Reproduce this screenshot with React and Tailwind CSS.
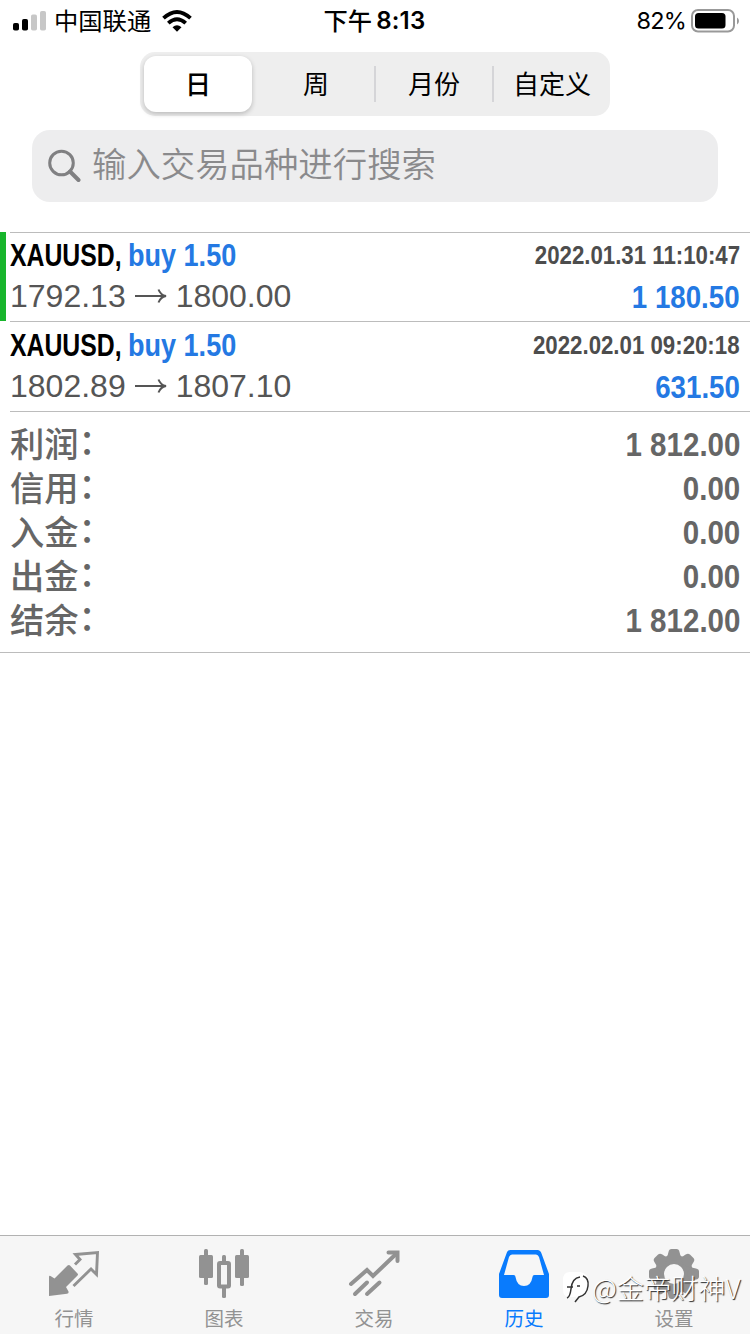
import { useState } from "react";

const periods = ["日", "周", "月份", "自定义"];

const deals = [
  { symbol: "XAUUSD,", side: "buy 1.50", time: "2022.01.31 11:10:47", open: "1792.13", close: "1800.00", profit: "1 180.50", active: true },
  { symbol: "XAUUSD,", side: "buy 1.50", time: "2022.02.01 09:20:18", open: "1802.89", close: "1807.10", profit: "631.50", active: false },
];

const totals = [
  { label: "利润", value: "1 812.00" },
  { label: "信用", value: "0.00" },
  { label: "入金", value: "0.00" },
  { label: "出金", value: "0.00" },
  { label: "结余", value: "1 812.00" },
];

const tabs = [
  { label: "行情", icon: QuotesIcon },
  { label: "图表", icon: ChartIcon },
  { label: "交易", icon: TradeIcon },
  { label: "历史", icon: HistoryIcon },
  { label: "设置", icon: GearIcon },
];

function QuotesIcon() {
  return (
    <svg width="52" height="50" viewBox="0 0 52 50" fill="currentColor">
      <path d="M22 16.500 29.500 24.500Q30.500 25.500 29.500 26.500L18 38 20.500 42.500Q21 44.500 19 44.800L1 47V28Q1 26 2.500 27L6.500 29.500 19.500 16.500Q21 15.300 22 16.500Z" />
      <path d="M25.500 37 43 20 48.500 25.500 49.500 3.500 27.500 5.500 32 10.500 27 15.500" fill="none" stroke="currentColor" strokeWidth="2.900" />
    </svg>
  );
}

function ChartIcon() {
  return (
    <svg width="52" height="50" viewBox="0 0 52 50" fill="currentColor">
      <rect x="6" y="0" width="4" height="36" rx="1.500" />
      <rect x="1" y="6" width="14" height="23" rx="1.500" />
      <rect x="42" y="0" width="4" height="37" rx="1.500" />
      <rect x="37" y="6" width="14" height="23" rx="1.500" />
      <rect x="24" y="6" width="4" height="8" rx="1.500" />
      <rect x="24" y="37" width="4" height="12" rx="1.500" />
      <rect x="21" y="14" width="10" height="23.500" rx="1" fill="none" stroke="currentColor" strokeWidth="4" />
    </svg>
  );
}

function TradeIcon() {
  return (
    <svg width="52" height="50" viewBox="0 0 52 50" fill="none" stroke="currentColor" strokeWidth="4" strokeLinecap="round">
      <path d="M3 35 19 21 25 27 48 5" />
      <path d="M40.500 3.500H49.500V12" />
      <path d="M7 45 19 33.500M19 45 31.500 33.500" />
    </svg>
  );
}

function HistoryIcon() {
  return (
    <svg width="52" height="50" viewBox="0 0 52 50" fill="currentColor">
      <path
        fillRule="evenodd"
        d="M12.500 1H39.500Q42.500 1 43.500 4.500L51 25V46Q51 49 48 49H4Q1 49 1 46V25L8.500 4.500Q9.500 1 12.500 1ZM14 5.500Q12 5.500 11 8L6 26H15.500Q17.500 26 17.500 28 19 37 26 37 33 37 34.500 28 34.500 26 36.500 26H46L41 8Q40 5.500 38 5.500Z"
      />
    </svg>
  );
}

function GearIcon() {
  return (
    <svg width="52" height="50" viewBox="0 0 52 50" fill="currentColor">
      <g transform="translate(26 25)">
        <path
          fillRule="evenodd"
          d="M-19 0A19 19 0 1 0 19 0A19 19 0 1 0 -19 0ZM-10 0A10 10 0 1 0 10 0A10 10 0 1 0 -10 0Z"
        />
        {[0, 45, 90, 135, 180, 225, 270, 315].map((a) => (
          <path key={a} transform={`rotate(${a})`} d="M-8 -16.500Q-6 -18 -5.500 -22 -5 -25 -2.500 -25H2.500Q5 -25 5.500 -22 6 -18 8 -16.500L0 -13Z" />
        ))}
      </g>
    </svg>
  );
}

function StatusBar() {
  return (
    <div className="grid h-[41px] grid-cols-3 pl-[13px] pr-[11px] leading-[39px]">
      <div className="flex items-center">
        <svg width="33" height="20" viewBox="0 0 33 20">
          <rect x="0" y="12" width="6" height="7.500" rx="1.800" />
          <rect x="9" y="8" width="6" height="11.500" rx="1.800" />
          <rect x="18" y="3.500" width="6" height="16" rx="1.800" fill="#c7c7c7" />
          <rect x="27" y="0" width="6" height="19.500" rx="1.800" fill="#c7c7c7" />
        </svg>
        <span className="-mt-[2px] ml-[8px] whitespace-nowrap text-[24.300px]">中国联通</span>
        <svg className="ml-[11px]" width="30" height="22" viewBox="0 0 30 22" fill="none" stroke="#000" strokeWidth="3.800">
          <path d="M1.500 8.200Q15 -4.200 28.500 8.200" />
          <path d="M6.300 13.200Q15 5.200 23.700 13.200" />
          <path d="M10.500 17.300Q15 13.200 19.500 17.300L15 21.800Z" fill="#000" stroke="none" />
        </svg>
      </div>
      <div className="flex items-center justify-center">
        <span className="-ml-[3px] -mt-[2px] text-[24.300px] font-medium">下午</span>
        <span className="ml-1 font-['Inter',sans-serif] text-2xl font-semibold leading-[41px] tracking-[0.2px]">8:13</span>
      </div>
      <div className="flex items-center justify-end">
        <span className="font-['Inter',sans-serif] text-[23.500px] leading-[41px] tracking-[-0.8px]">82%</span>
        <svg className="ml-[5px] -mr-px" width="49" height="24" viewBox="0 0 49 24">
          <rect x="1" y="1" width="42" height="21.500" rx="6" fill="none" stroke="#999" strokeWidth="2" />
          <rect x="4" y="4" width="30.500" height="15.500" rx="3.500" />
          <path d="M46 8.500Q48 9.500 48 12T46 15.500Z" fill="#999" />
        </svg>
      </div>
    </div>
  );
}

function PeriodPicker({ value, onChange }) {
  return (
    <div className="mx-auto mt-[11px] flex h-16 w-[470px] items-center rounded-[15px] bg-[#eeeeee] pl-1 text-[26px]">
      {periods.map((p, i) => (
        <button
          key={p}
          onClick={() => onChange(i)}
          className={
            i === value
              ? "mr-[4px] h-14 w-[108px] rounded-[12px] bg-white pb-[2px] font-medium leading-[54px] shadow-[0_2px_5px_rgba(0,0,0,0.22)]"
              : "h-9 w-[118px] border-l-2 border-[#d5d5d8] pb-[2px] leading-[34px] nth-2:border-transparent"
          }
        >
          {p}
        </button>
      ))}
    </div>
  );
}

function Deal({ deal }) {
  return (
    <div className={deal.active ? "flex h-[89px]" : "flex h-[90px]"}>
      <div className={deal.active ? "w-[6px] bg-[#18b52c]" : "w-[6px]"} />
      <div
        className={
          deal.active
            ? "ml-1 flex-1 border-t border-[#bcbcbc] pr-[10px] font-['Liberation_Sans',sans-serif]"
            : "ml-1 flex-1 border-t border-[#bcbcbc] pr-[10px] pt-px font-['Liberation_Sans',sans-serif]"
        }
      >
        <div className="flex h-[43px] justify-between font-bold leading-[45px]">
          <div className="flex text-[32px]">
            <span className="w-[118px] whitespace-nowrap">
              <span className="inline-block origin-left scale-x-[0.775]">{deal.symbol}</span>
            </span>
            <span className="inline-block origin-left scale-x-[0.845] text-[#2479e3]">{deal.side}</span>
          </div>
          <span className="origin-right scale-x-[0.866] text-[25.700px] text-[#4d4d4d]">{deal.time}</span>
        </div>
        <div className="flex h-[40px] items-center justify-between text-[32px] leading-[38px]">
          <div className="flex items-center text-[#555555]">
            <span>{deal.open}</span>
            <svg className="mx-[9px]" width="32" height="18" viewBox="0 0 32 18" fill="none" stroke="currentColor" strokeWidth="2">
              <path d="M0 9H30M23.500 2.500Q25.500 8 31 9 25.500 10 23.500 15.500" />
            </svg>
            <span>{deal.close}</span>
          </div>
          <span className="mt-px origin-right scale-x-[0.865] font-bold text-[#2479e3]">{deal.profit}</span>
        </div>
      </div>
    </div>
  );
}

function Watermark() {
  return (
    <div className="absolute bottom-[20px] left-[562px] flex h-[54px] items-center whitespace-nowrap text-[27.200px] font-light text-white [text-shadow:1px_1px_1px_#222]">
      <svg width="30" height="36" viewBox="0 0 30 36">
        <path d="M8 3H18Q27 4 27 15 27 24 20 27L14 32V28H7Q1 28 1 20V11Q1 3 8 3Z" fill="#fff" />
        <path d="M5 29Q8 28 9 20 10 9 18 8M5 18H11M15 17H18M21 7Q27 9 26 17 25 26 17 28L13 33" fill="none" stroke="#333" strokeWidth="1.500" />
      </svg>
      <span>@金帝财神V</span>
    </div>
  );
}

export default function App() {
  const [period, setPeriod] = useState(0);
  const [tab, setTab] = useState(3);

  return (
    <div className="relative flex h-[1334px] w-[750px] flex-col overflow-hidden bg-white font-['Noto_Sans_CJK_SC',sans-serif] text-black">
      <StatusBar />
      <PeriodPicker value={period} onChange={setPeriod} />

      <div className="mx-8 mt-[14px] flex h-[72px] items-center rounded-[18px] bg-[#ededee] pl-4 text-[#8a8a8c]">
        <svg width="33" height="34" viewBox="0 0 33 34" fill="none" stroke="#808082" strokeWidth="3">
          <circle cx="13.500" cy="14" r="11.800" />
          <path d="M22 22.500 30.500 31" strokeWidth="4" strokeLinecap="round" />
        </svg>
        <span className="-mt-[7px] ml-[11px] text-[34.400px] font-[350] leading-[65px]">输入交易品种进行搜索</span>
      </div>

      <div className="mt-[30px]">
        {deals.map((d) => (
          <Deal key={d.time} deal={d} />
        ))}
      </div>

      <div className="ml-[10px] h-[11px] border-t border-[#bcbcbc]" />
      <div className="h-[231px] border-b border-[#bcbcbc] px-[10px] font-['Liberation_Sans','Noto_Sans_CJK_SC',sans-serif] text-[#666666]">
        {totals.map((t) => (
          <div key={t.label} className="flex h-11 items-center justify-between leading-[44px]">
            <div className="mt-px flex text-[34.300px] font-medium">
              <span>{t.label}</span>
              <span className="-mt-[3px]">：</span>
            </div>
            <span className="mt-px origin-right scale-x-[0.895] text-[33px] font-bold">{t.value}</span>
          </div>
        ))}
      </div>

      <div className="mt-auto grid h-[99px] grid-cols-5 border-t border-[#b2b2b2] bg-[#f6f6f6]">
        {tabs.map((t, i) => {
          const Icon = t.icon;
          return (
            <button
              key={t.label}
              onClick={() => setTab(i)}
              className={
                i === tab
                  ? "flex flex-col items-center pt-[13px] pr-[2px] text-[#097bfd]"
                  : "flex flex-col items-center pt-[13px] pr-[2px] text-[#929292]"
              }
            >
              <Icon />
              <span className="mt-[5px] text-[19.500px] leading-7">{t.label}</span>
            </button>
          );
        })}
      </div>
      <Watermark />
    </div>
  );
}
